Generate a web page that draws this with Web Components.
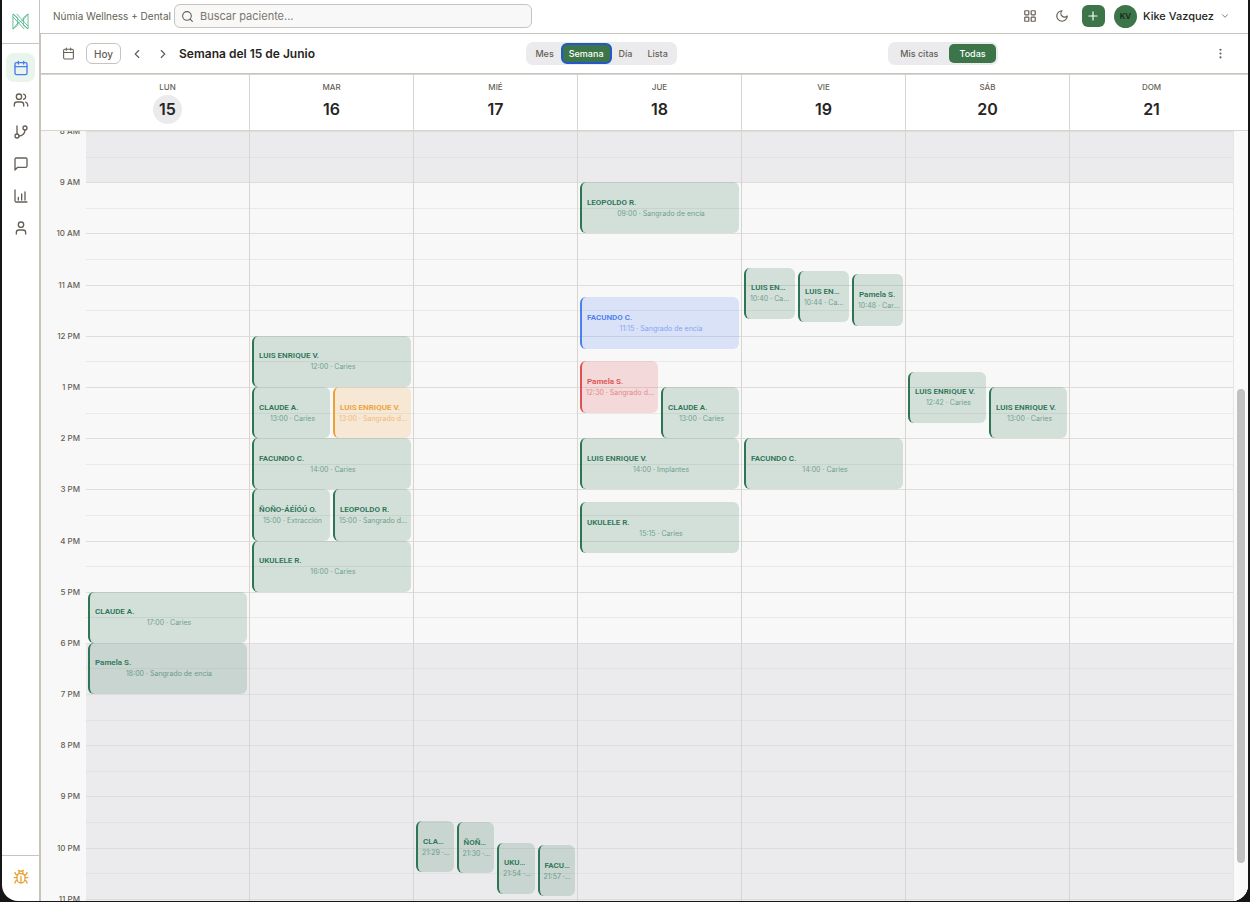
<!DOCTYPE html>
<html lang="es">
<head>
<meta charset="utf-8">
<title>Númia - Agenda</title>
<style>
    html {
        --white: #ffffff;
        --surface: #f8f8f8;
        --muted: #ebebed;
        --line: #c8c3bd;
        --line-soft: #d8d5d0;
        --ink: #262522;
        --ink-soft: #665f55;
        --brand: #3b7549;
        height: 100%;
        background: #151618;
    }

    body {
        margin: 0;
        height: 100%;
        font-family: Inter, "Liberation Sans", sans-serif;
        font-size: 10px;
        color: var(--ink-soft);
    }
</style>
</head>
<body>

<clinic-app>
    <side-bar slot="side"></side-bar>
    <top-bar slot="top" clinic="Númia Wellness + Dental" user="Kike Vazquez" initials="KV"></top-bar>
    <week-toolbar slot="toolbar">Semana del 15 de Junio</week-toolbar>
    <week-calendar slot="content"></week-calendar>
</clinic-app>

<script>
const ICONS = {
    calendar: '<path d="M8 2v4M16 2v4M3 10h18"/><rect x="3" y="4" width="18" height="18" rx="2"/>',
    users: '<path d="M16 21v-2a4 4 0 0 0-4-4H6a4 4 0 0 0-4 4v2"/><circle cx="9" cy="7" r="4"/><path d="M22 21v-2a4 4 0 0 0-3-3.87M16 3.13a4 4 0 0 1 0 7.75"/>',
    branch: '<path d="M6 3v12"/><circle cx="18" cy="6" r="3"/><circle cx="6" cy="18" r="3"/><path d="M18 9a9 9 0 0 1-9 9"/>',
    message: '<path d="M21 15a2 2 0 0 1-2 2H7l-4 4V5a2 2 0 0 1 2-2h14a2 2 0 0 1 2 2z"/>',
    chart: '<path d="M3 3v16a2 2 0 0 0 2 2h16M8 18v-4M13 18V9M18 18V6"/>',
    user: '<circle cx="12" cy="7" r="4"/><path d="M19 21v-2a4 4 0 0 0-4-4H9a4 4 0 0 0-4 4v2"/>',
    bug: '<path d="M12 19v-8M14.1 7.6A4 4 0 0 1 18 11v4a6 6 0 0 1-12 0v-4a4 4 0 0 1 4-4h4M14 3.9 16 2M8 2l2 2M9 7.1V6a3 3 0 1 1 6 0v1.1M18 13h4M2 13h4M21 5a4 4 0 0 1-3.6 4M3 5a4 4 0 0 0 3.6 4M17.2 17a4 4 0 0 1 3.8 4M6.8 17A4 4 0 0 0 3 21"/>',
    search: '<circle cx="11" cy="11" r="8"/><path d="m21 21-4.3-4.3"/>',
    apps: '<rect x="3" y="3" width="7" height="7" rx="1"/><rect x="14" y="3" width="7" height="7" rx="1"/><rect x="14" y="14" width="7" height="7" rx="1"/><rect x="3" y="14" width="7" height="7" rx="1"/>',
    moon: '<path d="M12 3a6 6 0 0 0 9 9 9 9 0 1 1-9-9z"/>',
    plus: '<path d="M5 12h14M12 5v14"/>',
    down: '<path d="m6 9 6 6 6-6"/>',
    left: '<path d="m15 18-6-6 6-6"/>',
    right: '<path d="m9 18 6-6-6-6"/>',
    dots: '<circle cx="12" cy="12" r="1"/><circle cx="12" cy="5" r="1"/><circle cx="12" cy="19" r="1"/>'
};

// first hour of the visible part of the day
const START = 8;
const END = 24;

class UiIcon extends HTMLElement {

    connectedCallback() {
        if (this.shadowRoot) return;
        const size = this.getAttribute('size') || 16;
        this.attachShadow({mode: 'open'});
        this.shadowRoot.innerHTML = `
            <style>
                :host { display: block; flex: none; }
                svg { display: block; }
            </style>
            <svg width="${size}" height="${size}" viewBox="0 0 24 24" fill="none" stroke="currentColor"
                stroke-width="${this.getAttribute('stroke') || 2}" stroke-linecap="round" stroke-linejoin="round"
                aria-hidden="true">${ICONS[this.getAttribute('name')]}</svg>
        `;
    }

}

class ClinicApp extends HTMLElement {

    constructor() {
        super();
        this.attachShadow({mode: 'open'});
        this.shadowRoot.innerHTML = `
            <style>
                :host { display: block; height: 100%; box-sizing: border-box; padding: 0 2px 1px; }
                .window {
                    display: flex;
                    height: 100%;
                    overflow: hidden;
                    background: var(--white);
                    border-radius: 0 0 16px 16px;
                }
                .page { flex: 1; min-width: 0; display: flex; flex-direction: column; }
                main {
                    flex: 1;
                    min-height: 0;
                    display: flex;
                    flex-direction: column;
                    border-left: 1px solid var(--line);
                }
            </style>
            <div class="window">
                <slot name="side"></slot>
                <div class="page">
                    <slot name="top"></slot>
                    <main>
                        <slot name="toolbar"></slot>
                        <slot name="content"></slot>
                    </main>
                </div>
            </div>
        `;
    }

}

class SideBar extends HTMLElement {

    constructor() {
        super();
        const links = [
            ['calendar', 'Agenda'],
            ['users', 'Pacientes'],
            ['branch', 'Flujos'],
            ['message', 'Mensajes'],
            ['chart', 'Informes'],
            ['user', 'Perfil']
        ];
        this.attachShadow({mode: 'open'});
        this.shadowRoot.innerHTML = `
            <style>
                :host {
                    display: flex;
                    flex-direction: column;
                    flex: none;
                    border-right: 1px solid var(--line);
                }
                .logo {
                    display: flex;
                    justify-content: center;
                    align-items: center;
                    height: 43px;
                    border-bottom: 1px solid var(--line);
                }
                nav {
                    flex: 1;
                    display: flex;
                    flex-direction: column;
                    gap: 3px;
                    padding: 9px 4px;
                }
                a, button {
                    display: flex;
                    justify-content: center;
                    align-items: center;
                    width: 29px;
                    height: 29px;
                    border-radius: 8px;
                    color: var(--ink-soft);
                }
                a.active { background: #e8f4ec; color: #4a7df0; }
                footer { padding: 6px 4px 10px; border-top: 1px solid var(--line); }
                button { padding: 0; border: 0; background: none; color: #e9a23b; }
            </style>
            <div class="logo">
                <svg width="17" height="17" viewBox="0 0 18 18" fill="none" stroke="#4fb58a" stroke-width="0.9" stroke-linejoin="round" aria-hidden="true">
                    <path d="M1 1v16l5-4V5zM17 1v16l-5-4V5zM1 1l16 16M5 1l12 13M1 4l12 13M1 17l5-6M17 1l-5 6M6 11l6-4"/>
                </svg>
            </div>
            <nav>
                ${links.map(([icon, label], i) => `
                    <a href="#${icon}" aria-label="${label}" class="${i == 0 ? 'active' : ''}"><ui-icon name="${icon}"></ui-icon></a>
                `).join('')}
            </nav>
            <footer>
                <button type="button" aria-label="Reportar un error"><ui-icon name="bug"></ui-icon></button>
            </footer>
        `;
    }

}

class TopBar extends HTMLElement {

    connectedCallback() {
        if (this.shadowRoot) return;
        this.attachShadow({mode: 'open'});
        this.shadowRoot.innerHTML = `
            <style>
                :host {
                    display: flex;
                    align-items: center;
                    height: 32px;
                    padding: 0 18px 1px 13px;
                    border-bottom: 1px solid var(--line);
                }
                .clinic { white-space: nowrap; }
                label {
                    display: flex;
                    align-items: center;
                    gap: 6px;
                    box-sizing: border-box;
                    flex: 0 1 358px;
                    height: 24px;
                    margin-left: 3px;
                    padding: 0 6px;
                    border: 1px solid var(--line);
                    border-radius: 6px;
                    background: var(--surface);
                }
                input {
                    flex: 1;
                    min-width: 0;
                    padding: 0;
                    border: 0;
                    outline: 0;
                    background: none;
                    font: inherit;
                    font-size: 11px;
                    color: var(--ink);
                }
                input::placeholder { color: #7d766c; opacity: 1; }
                button {
                    display: flex;
                    align-items: center;
                    justify-content: center;
                    padding: 0;
                    border: 0;
                    background: none;
                    font: inherit;
                    color: inherit;
                }
                .actions { display: flex; align-items: center; gap: 8px; margin-left: auto; }
                .icon { width: 24px; height: 24px; }
                .add { width: 23px; height: 22px; border-radius: 6px; background: var(--brand); color: var(--white); }
                .user { gap: 6px; margin-left: 1px; font-size: 11px; font-weight: 500; color: var(--ink); }
                .avatar {
                    display: grid;
                    place-items: center;
                    width: 23px;
                    height: 23px;
                    border-radius: 50%;
                    background: var(--brand);
                    font-size: 8px;
                    font-weight: 600;
                    color: #14261a;
                }
                .user ui-icon { color: var(--ink-soft); }
            </style>
            <span class="clinic">${this.getAttribute('clinic')}</span>
            <label>
                <ui-icon name="search" size="13"></ui-icon>
                <input type="text" placeholder="Buscar paciente..." aria-label="Buscar paciente">
            </label>
            <div class="actions">
                <button type="button" class="icon" aria-label="Aplicaciones"><ui-icon name="apps" size="14"></ui-icon></button>
                <button type="button" class="icon" aria-label="Modo oscuro"><ui-icon name="moon" size="14"></ui-icon></button>
                <button type="button" class="add" aria-label="Nueva cita"><ui-icon name="plus" size="14"></ui-icon></button>
                <button type="button" class="user">
                    <span class="avatar">${this.getAttribute('initials')}</span>
                    ${this.getAttribute('user')}
                    <ui-icon name="down" size="10"></ui-icon>
                </button>
            </div>
        `;
    }

}

class WeekToolbar extends HTMLElement {

    constructor() {
        super();
        this.attachShadow({mode: 'open'});
        this.shadowRoot.innerHTML = `
            <style>
                :host {
                    display: flex;
                    align-items: center;
                    justify-content: space-between;
                    height: 39px;
                    padding: 0 15px;
                    border-bottom: 1px solid var(--line);
                }
                .range { display: flex; align-items: center; gap: 2px; }
                h1 { margin: 0 0 0 2px; font-size: 12px; font-weight: 600; line-height: 15px; color: var(--ink); white-space: nowrap; }
                button {
                    display: flex;
                    align-items: center;
                    justify-content: center;
                    box-sizing: border-box;
                    padding: 0;
                    border: 0;
                    background: none;
                    font: inherit;
                    font-weight: 500;
                    color: inherit;
                }
                .icon { width: 24px; height: 23px; }
                .today {
                    height: 21px;
                    padding: 0 7px;
                    margin: 0 2px 0 4px;
                    border: 1px solid var(--line);
                    border-radius: 6px;
                }
                .group {
                    display: flex;
                    align-items: center;
                    gap: 1px;
                    box-sizing: border-box;
                    height: 23px;
                    padding: 2px;
                    border-radius: 7px;
                    background: var(--muted);
                    font-size: 9px;
                }
                .group button { height: 19px; padding: 0 7px; border-radius: 5px; }
                .group .on { background: var(--brand); color: var(--white); }
                .views .on { outline: 2px solid #2457c9; outline-offset: -1px; }
                .group.scope button { padding: 0 10px; }
            </style>
            <div class="range">
                <button type="button" class="icon" aria-label="Elegir fecha"><ui-icon name="calendar" size="13"></ui-icon></button>
                <button type="button" class="today">Hoy</button>
                <button type="button" class="icon" aria-label="Semana anterior"><ui-icon name="left" size="14"></ui-icon></button>
                <button type="button" class="icon" aria-label="Semana siguiente"><ui-icon name="right" size="14"></ui-icon></button>
                <h1><slot></slot></h1>
            </div>
            <div class="group views">
                <button type="button">Mes</button>
                <button type="button" class="on" aria-pressed="true">Semana</button>
                <button type="button">Día</button>
                <button type="button">Lista</button>
            </div>
            <div class="group scope">
                <button type="button">Mis citas</button>
                <button type="button" class="on" aria-pressed="true">Todas</button>
            </div>
            <button type="button" class="icon" aria-label="Más opciones"><ui-icon name="dots" size="13"></ui-icon></button>
        `;
    }

}

class CalendarEvent extends HTMLElement {

    connectedCallback() {
        if (this.shadowRoot) return;
        this.attachShadow({mode: 'open'});
        this.shadowRoot.innerHTML = `
            <style>
                :host { display: flex; min-width: 0; min-height: 0; --tone: 45, 117, 85; }
                :host([tone=blue]) { --tone: 77, 126, 240; }
                :host([tone=red]) { --tone: 224, 80, 80; }
                :host([tone=orange]) { --tone: 236, 160, 56; }
                button {
                    display: flex;
                    flex-direction: column;
                    justify-content: center;
                    flex: 1;
                    min-width: 0;
                    box-sizing: border-box;
                    padding: 0 3px 0 4px;
                    border: 0;
                    border-left: 2px solid rgb(var(--tone));
                    border-radius: 6px;
                    background: rgba(var(--tone), 0.18);
                    font: inherit;
                    font-size: 8px;
                    line-height: 11px;
                    color: rgb(var(--tone));
                }
                span { overflow: hidden; text-overflow: ellipsis; white-space: nowrap; }
                .name {
                    padding: 0 2px 0 1px;
                    font-family: Roboto, "Liberation Sans", sans-serif;
                    font-weight: 600;
                    text-align: left;
                }
                .info { font-size: 7px; opacity: 0.6; }
            </style>
            <button type="button">
                <span class="name"><slot></slot></span>
                <span class="info">${this.getAttribute('time')} · ${this.getAttribute('reason')}</span>
            </button>
        `;
    }

}

class WeekCalendar extends HTMLElement {

    // lane: [position, lanes side by side]
    days = [
        {name: 'LUN', date: 15, today: true, events: [
            {time: '17:00', who: 'CLAUDE A.', reason: 'Caries'},
            {time: '18:00', who: 'Pamela S.', reason: 'Sangrado de encía'}
        ]},
        {name: 'MAR', date: 16, events: [
            {time: '12:00', who: 'LUIS ENRIQUE V.', reason: 'Caries'},
            {time: '13:00', who: 'CLAUDE A.', reason: 'Caries', lane: [0, 2]},
            {time: '13:00', who: 'LUIS ENRIQUE V.', reason: 'Sangrado de encía', lane: [1, 2], tone: 'orange'},
            {time: '14:00', who: 'FACUNDO C.', reason: 'Caries'},
            {time: '15:00', who: 'ÑOÑO-ÁÉÍÓÚ O.', reason: 'Extracción', lane: [0, 2]},
            {time: '15:00', who: 'LEOPOLDO R.', reason: 'Sangrado de encía', lane: [1, 2]},
            {time: '16:00', who: 'UKULELE R.', reason: 'Caries'}
        ]},
        {name: 'MIÉ', date: 17, events: [
            {time: '21:29', who: 'CLAUDE A.', reason: 'Caries', lane: [0, 4]},
            {time: '21:30', who: 'ÑOÑO-ÁÉÍÓÚ O.', reason: 'Caries', lane: [1, 4]},
            {time: '21:54', who: 'UKULELE R.', reason: 'Caries', lane: [2, 4]},
            {time: '21:57', who: 'FACUNDO C.', reason: 'Caries', lane: [3, 4]}
        ]},
        {name: 'JUE', date: 18, events: [
            {time: '09:00', who: 'LEOPOLDO R.', reason: 'Sangrado de encía'},
            {time: '11:15', who: 'FACUNDO C.', reason: 'Sangrado de encía', tone: 'blue'},
            {time: '12:30', who: 'Pamela S.', reason: 'Sangrado de encía', lane: [0, 2], tone: 'red'},
            {time: '13:00', who: 'CLAUDE A.', reason: 'Caries', lane: [1, 2]},
            {time: '14:00', who: 'LUIS ENRIQUE V.', reason: 'Implantes'},
            {time: '15:15', who: 'UKULELE R.', reason: 'Caries'}
        ]},
        {name: 'VIE', date: 19, events: [
            {time: '10:40', who: 'LUIS ENRIQUE V.', reason: 'Caries', lane: [0, 3]},
            {time: '10:44', who: 'LUIS ENRIQUE V.', reason: 'Caries', lane: [1, 3]},
            {time: '10:48', who: 'Pamela S.', reason: 'Caries', lane: [2, 3]},
            {time: '14:00', who: 'FACUNDO C.', reason: 'Caries'}
        ]},
        {name: 'SÁB', date: 20, events: [
            {time: '12:42', who: 'LUIS ENRIQUE V.', reason: 'Caries', lane: [0, 2]},
            {time: '13:00', who: 'LUIS ENRIQUE V.', reason: 'Caries', lane: [1, 2]}
        ]},
        {name: 'DOM', date: 21, events: []}
    ]

    constructor() {
        super();
        this.attachShadow({mode: 'open'});
        this.render();
    }

    hourLabel(hour) {
        return `${hour > 12 ? hour - 12 : hour} ${hour < 12 ? 'AM' : 'PM'}`;
    }

    // every day is a grid of one row per minute and twelve columns
    renderEvent({time, who, reason, lane = [0, 1], tone = 'green'}) {
        const [h, m] = time.split(':').map(Number);
        const row = (h - START) * 60 + m + 1;
        const span = 12 / lane[1];
        return `
            <calendar-event time="${time}" reason="${reason}" tone="${tone}"
                style="grid-row: ${row} / span 60; grid-column: ${lane[0] * span + 1} / span ${span}">${who}</calendar-event>
        `;
    }

    render() {
        const hours = [];
        for (let h = START; h < END; h++) hours.push(h);

        this.shadowRoot.innerHTML = `
            <style>
                :host { flex: 1; min-height: 0; display: flex; flex-direction: column; background: var(--surface); }
                header {
                    display: grid;
                    grid-template-columns: 45px repeat(7, minmax(0, 1fr)) 14px;
                    height: 55px;
                    border-top: 1px solid var(--line-soft);
                    border-bottom: 1px solid var(--line-soft);
                    background: var(--white);
                }
                .head {
                    display: flex;
                    flex-direction: column;
                    align-items: center;
                    gap: 2px;
                    padding-top: 6px;
                    border-right: 1px solid var(--line-soft);
                    font-size: 8px;
                    font-weight: 500;
                    line-height: 12px;
                }
                .head:nth-child(8) { border-color: transparent; }
                .head b {
                    display: grid;
                    place-items: center;
                    box-sizing: border-box;
                    width: 29px;
                    height: 29px;
                    padding-bottom: 2px;
                    border-radius: 50%;
                    font-size: 16px;
                    font-weight: 600;
                    color: var(--ink);
                }
                .head b.today { background: var(--muted); }
                .scroll { flex: 1; min-height: 0; display: flex; overflow: hidden; }
                .hours, .day {
                    display: grid;
                    height: 819px;
                }
                .hours {
                    flex: 0 0 45px;
                    grid-template-rows: repeat(${END - START}, 1fr);
                    font-size: 8px;
                    font-weight: 500;
                    line-height: 10px;
                }
                .hours span { margin: -5px 6px 0 0; text-align: right; }
                .days { flex: 1; display: grid; grid-template-columns: repeat(7, minmax(0, 1fr)); }
                .day {
                    box-sizing: border-box;
                    grid-template-rows: repeat(${(END - START) * 60}, minmax(0, 1fr));
                    grid-template-columns: repeat(12, minmax(0, 1fr));
                    column-gap: 3px;
                    padding: 0 2px;
                    border-right: 1px solid var(--line-soft);
                }
                .day:last-child { border-color: #e6e6e6; }
                .slot {
                    grid-column: 1 / -1;
                    margin: 0 -2px;
                    border-top: 1px solid #e9e9e9;
                }
                .slot.full { border-color: #dedddb; }
                .slot.closed { background: var(--muted); }
                .slot.closed:not(.full) { border-color: #e2e2e2; }
                .bar {
                    flex: 0 0 14px;
                    display: flex;
                    justify-content: center;
                    box-sizing: border-box;
                    padding: 258px 0 38px;
                    background: #fafafa;
                }
                .bar i { width: 8px; border-radius: 4px; background: #c1c1c1; }
            </style>
            <header>
                <span></span>
                ${this.days.map(day => `
                    <div class="head">${day.name}<b class="${day.today ? 'today' : ''}">${day.date}</b></div>
                `).join('')}
            </header>
            <div class="scroll">
                <div class="hours">
                    ${hours.map(h => `<span>${this.hourLabel(h)}</span>`).join('')}
                </div>
                <div class="days">
                    ${this.days.map(day => `
                        <div class="day">
                            ${hours.map(h => {
                                const closed = h < 9 || h >= 18 ? 'closed' : '';
                                const row = (h - START) * 60 + 1;
                                return `
                                    <div class="slot full ${closed}" style="grid-row: ${row} / span 30"></div>
                                    <div class="slot ${closed}" style="grid-row: ${row + 30} / span 30"></div>
                                `;
                            }).join('')}
                            ${day.events.map(event => this.renderEvent(event)).join('')}
                        </div>
                    `).join('')}
                </div>
                <div class="bar"><i></i></div>
            </div>
        `;
    }

}

customElements.define('ui-icon', UiIcon);
customElements.define('clinic-app', ClinicApp);
customElements.define('side-bar', SideBar);
customElements.define('top-bar', TopBar);
customElements.define('week-toolbar', WeekToolbar);
customElements.define('calendar-event', CalendarEvent);
customElements.define('week-calendar', WeekCalendar);
</script>
</body>
</html>
